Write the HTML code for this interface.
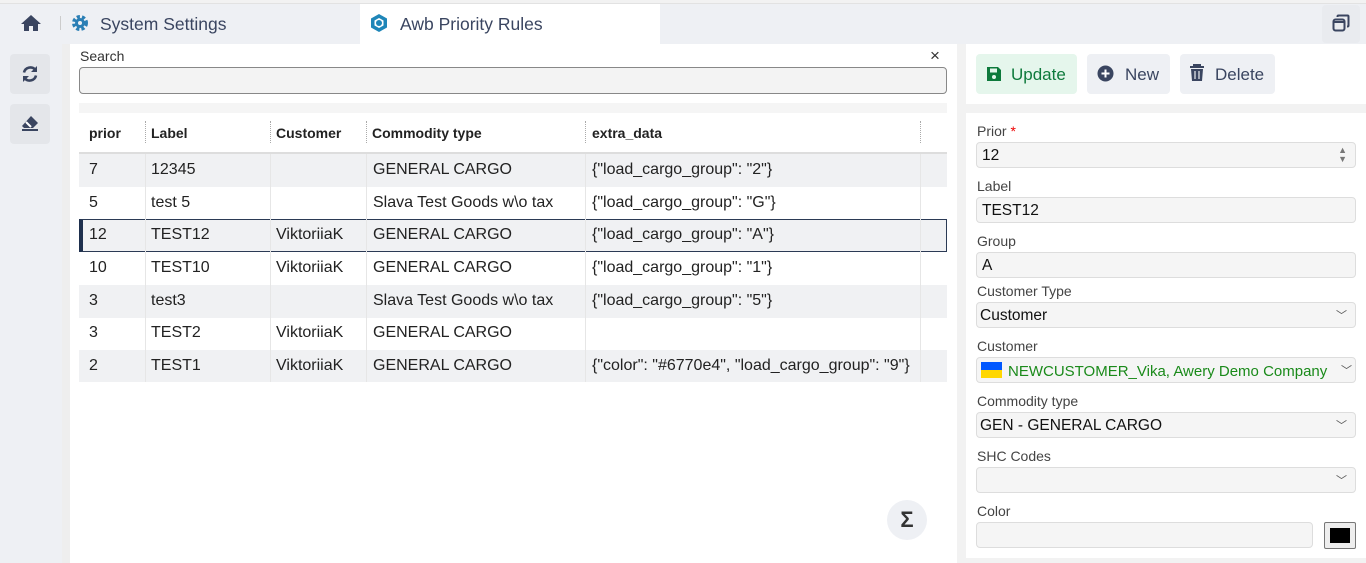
<!DOCTYPE html>
<html><head><meta charset="utf-8"><style>
*{box-sizing:border-box;margin:0;padding:0}
body{width:1366px;height:563px;overflow:hidden;background:#f2f2f2;font-family:"Liberation Sans",sans-serif;position:relative;color:#222}
.a{position:absolute}
.top{left:0;top:3px;width:1366px;height:41px;background:#eef0f4;border-top:1px solid #e2e2e2}
.tab{font-size:17.5px;color:#3a4560}
.cell{position:absolute;font-size:16px;color:#222;top:7px}
.row{position:absolute;left:79px;width:868px;height:33px}
.g{background:#f0f1f3}
.lbl{position:absolute;left:977px;font-size:14px;color:#444}
.in{position:absolute;left:976px;width:380px;height:26px;background:#f5f5f5;border:1px solid #ddd;border-radius:4px;font-size:15.5px;padding:4px 5px;color:#111}
.chev{position:absolute;right:8px;top:4px;font-size:11px;color:#555}
.btn{position:absolute;top:54px;height:40px;border-radius:4px;background:#eef0f4;font-size:17px;color:#3a4560;padding:11px 0 0 0}
</style></head><body>
<div class="a top"></div>
<div class="a" style="left:360px;top:4px;width:300px;height:40px;background:#fff"></div>
<svg class="a" style="left:20px;top:14px" width="22" height="18" viewBox="0 0 22 18"><path d="M11 1L1 10h3v7h5v-5h4v5h5v-7h3z" fill="#3a4560"/></svg>
<div class="a" style="left:60px;top:16px;width:1px;height:14px;background:#ccc"></div>
<svg class="a" style="left:71px;top:14px" width="18" height="18" viewBox="0 0 18 18"><circle cx="9" cy="9" r="6" fill="none" stroke="#2b7fb5" stroke-width="4" stroke-dasharray="3 2"/><circle cx="9" cy="9" r="5" fill="#2b7fb5"/><circle cx="9" cy="9" r="2" fill="#eef0f4"/></svg>
<div class="a tab" style="left:100px;top:14px">System Settings</div>
<svg class="a" style="left:370px;top:13px" width="18" height="20" viewBox="0 0 18 20"><path d="M9 1L17 5.5v9L9 19 1 14.5v-9z" fill="#1f86b8"/><path d="M9 5l4.5 2.5v5L9 15l-4.5-2.5v-5z" fill="#fff"/><circle cx="9" cy="10" r="3" fill="#1f86b8"/></svg>
<div class="a tab" style="left:400px;top:14px">Awb Priority Rules</div>
<div class="a" style="left:1322px;top:5px;width:38px;height:38px;background:#e9ebef;border-radius:4px"></div>
<svg class="a" style="left:1332px;top:14px" width="18" height="18" viewBox="0 0 18 18"><rect x="1.5" y="5.5" width="11" height="11" rx="2" fill="none" stroke="#3a4560" stroke-width="2"/><path d="M1.5 8h11" stroke="#3a4560" stroke-width="2"/><path d="M5.5 3V2.5a1 1 0 0 1 1-1h9a1 1 0 0 1 1 1v9a1 1 0 0 1-1 1H15" fill="none" stroke="#3a4560" stroke-width="2"/></svg>

<div class="a" style="left:0;top:44px;width:62px;height:519px;background:#eef0f4"></div>
<div class="a" style="left:62px;top:44px;width:8px;height:519px;background:#eeeeee"></div>
<div class="a" style="left:10px;top:54px;width:40px;height:40px;background:#e4e6ea;border-radius:4px"></div>
<div class="a" style="left:10px;top:104px;width:40px;height:40px;background:#e4e6ea;border-radius:4px"></div>
<svg class="a" style="left:21px;top:65px" width="18" height="18" viewBox="0 0 18 18"><path d="M3 7.5A6.5 6.5 0 0 1 14.5 5" fill="none" stroke="#3a4560" stroke-width="2.6"/><path d="M16 1v6h-6z" fill="#3a4560"/><path d="M15 10.5A6.5 6.5 0 0 1 3.5 13" fill="none" stroke="#3a4560" stroke-width="2.6"/><path d="M2 17v-6h6z" fill="#3a4560"/></svg>
<svg class="a" style="left:21px;top:115px" width="18" height="16" viewBox="0 0 18 16"><path d="M10 1l7 7-5 5H3l-2-2z" fill="#3a4560"/><path d="M5 7l5 5" stroke="#fff" stroke-width="2"/><path d="M1 15h16" stroke="#3a4560" stroke-width="2"/></svg>

<div class="a" style="left:70px;top:44px;width:887px;height:519px;background:#fff"></div>
<div class="a" style="left:80px;top:48px;font-size:14px;color:#333">Search</div>
<div class="a" style="left:930px;top:46px;font-size:17px;color:#333">×</div>
<div class="a" style="left:79px;top:67px;width:868px;height:27px;background:#f3f3f3;border:1px solid #888;border-radius:4px"></div>
<div class="a" style="left:79px;top:103px;width:868px;height:10px;background:#f5f5f5"></div>
<div class="a" style="left:79px;top:113px;width:868px;height:41px;border-bottom:2px solid #ddd">
<div class="cell" style="left:10px;top:12px;font-size:14px;font-weight:bold">prior</div>
<div class="cell" style="left:72px;top:12px;font-size:14px;font-weight:bold">Label</div>
<div class="cell" style="left:197px;top:12px;font-size:14px;font-weight:bold">Customer</div>
<div class="cell" style="left:293px;top:12px;font-size:14px;font-weight:bold">Commodity type</div>
<div class="cell" style="left:513px;top:12px;font-size:14px;font-weight:bold">extra_data</div>
<div class="a" style="left:66px;top:8px;height:22px;border-left:1px dotted #aaa"></div>
<div class="a" style="left:191px;top:8px;height:22px;border-left:1px dotted #aaa"></div>
<div class="a" style="left:287px;top:8px;height:22px;border-left:1px dotted #aaa"></div>
<div class="a" style="left:506px;top:8px;height:22px;border-left:1px dotted #aaa"></div>
<div class="a" style="left:841px;top:8px;height:22px;border-left:1px dotted #aaa"></div>
</div>

<div class="row g" style="top:154px"><div class="cell" style="left:10px">7</div><div class="cell" style="left:72px">12345</div><div class="cell" style="left:294px">GENERAL CARGO</div><div class="cell" style="left:513px">{"load_cargo_group": "2"}</div></div>
<div class="row" style="top:187px"><div class="cell" style="left:10px">5</div><div class="cell" style="left:72px">test 5</div><div class="cell" style="left:294px">Slava Test Goods w\o tax</div><div class="cell" style="left:513px">{"load_cargo_group": "G"}</div></div>
<div class="row g" style="top:219px;border:1px solid #2b3a55;border-left:4px solid #1e2f4d"><div class="cell" style="left:6px;top:6px">12</div><div class="cell" style="left:68px;top:6px">TEST12</div><div class="cell" style="left:193px;top:6px">ViktoriiaK</div><div class="cell" style="left:290px;top:6px">GENERAL CARGO</div><div class="cell" style="left:509px;top:6px">{"load_cargo_group": "A"}</div></div>
<div class="row" style="top:252px"><div class="cell" style="left:10px">10</div><div class="cell" style="left:72px">TEST10</div><div class="cell" style="left:197px">ViktoriiaK</div><div class="cell" style="left:294px">GENERAL CARGO</div><div class="cell" style="left:513px">{"load_cargo_group": "1"}</div></div>
<div class="row g" style="top:285px"><div class="cell" style="left:10px">3</div><div class="cell" style="left:72px">test3</div><div class="cell" style="left:294px">Slava Test Goods w\o tax</div><div class="cell" style="left:513px">{"load_cargo_group": "5"}</div></div>
<div class="row" style="top:317px"><div class="cell" style="left:10px">3</div><div class="cell" style="left:72px">TEST2</div><div class="cell" style="left:197px">ViktoriiaK</div><div class="cell" style="left:294px">GENERAL CARGO</div></div>
<div class="row g" style="top:350px;height:32px"><div class="cell" style="left:10px">2</div><div class="cell" style="left:72px">TEST1</div><div class="cell" style="left:197px">ViktoriiaK</div><div class="cell" style="left:294px">GENERAL CARGO</div><div class="cell" style="left:513px">{"color": "#6770e4", "load_cargo_group": "9"}</div></div>
<div class="a" style="left:145px;top:154px;width:1px;height:228px;background:#e6e6e6"></div>
<div class="a" style="left:270px;top:154px;width:1px;height:228px;background:#e6e6e6"></div>
<div class="a" style="left:366px;top:154px;width:1px;height:228px;background:#e6e6e6"></div>
<div class="a" style="left:585px;top:154px;width:1px;height:228px;background:#e6e6e6"></div>
<div class="a" style="left:920px;top:154px;width:1px;height:228px;background:#e6e6e6"></div>
<div class="a" style="left:887px;top:500px;width:40px;height:40px;border-radius:50%;background:#eef0f4;font-size:22px;text-align:center;line-height:40px;color:#333;font-weight:bold">Σ</div>

<div class="a" style="left:966px;top:44px;width:400px;height:60px;background:#fff"></div>
<div class="a" style="left:966px;top:113px;width:400px;height:445px;background:#fff"></div>
<div class="btn" style="left:976px;width:101px;background:#e5f6ec;color:#0e7a3c"><svg class="a" style="left:10px;top:12px" width="16" height="16" viewBox="0 0 16 16"><path d="M1 1h11l3 3v11H1z" fill="#0e7a3c"/><rect x="4" y="2.5" width="7" height="4" fill="#e5f6ec"/><circle cx="8" cy="11" r="2" fill="#e5f6ec"/></svg><span class="a" style="left:35px;top:11px">Update</span></div>
<div class="btn" style="left:1087px;width:83px"><svg class="a" style="left:10px;top:11px" width="17" height="17" viewBox="0 0 17 17"><circle cx="8.5" cy="8.5" r="8" fill="#3a4560"/><path d="M8.5 4.5v8M4.5 8.5h8" stroke="#fff" stroke-width="2"/></svg><span class="a" style="left:38px;top:11px">New</span></div>
<div class="btn" style="left:1180px;width:95px"><svg class="a" style="left:9px;top:10px" width="16" height="18" viewBox="0 0 16 18"><path d="M1 3h14M5 3V1h6v2" stroke="#3a4560" stroke-width="2" fill="none"/><path d="M2 5h12l-1 12H3z" fill="#3a4560"/><path d="M6 7v8M10 7v8" stroke="#eef0f4" stroke-width="1.2"/></svg><span class="a" style="left:35px;top:11px">Delete</span></div>

<div class="lbl" style="top:123px">Prior <span style="color:#e00">*</span></div>
<div class="in" style="top:142px">12<span class="a" style="right:8px;top:3px;font-size:9px;color:#777;line-height:9px">▲<br>▼</span></div>
<div class="lbl" style="top:178px">Label</div>
<div class="in" style="top:197px">TEST12</div>
<div class="lbl" style="top:233px">Group</div>
<div class="in" style="top:252px">A</div>
<div class="lbl" style="top:283px">Customer Type</div>
<div class="in" style="top:302px;padding-left:3px">Customer<span class="chev">﹀</span></div>
<div class="lbl" style="top:338px">Customer</div>
<div class="in" style="top:357px;padding-left:4px;color:#1a8a1a;white-space:nowrap;overflow:hidden;font-size:15px"><span style="display:inline-block;width:21px;height:16px;vertical-align:-2px;background:linear-gradient(#0057ff 50%,#ffd700 50%);margin-right:6px"></span>NEWCUSTOMER_Vika, Awery Demo Company<span class="chev" style="background:#f5f5f5;right:3px;padding-left:2px">﹀</span></div>
<div class="lbl" style="top:393px">Commodity type</div>
<div class="in" style="top:412px;padding-left:3px">GEN - GENERAL CARGO<span class="chev">﹀</span></div>
<div class="lbl" style="top:448px">SHC Codes</div>
<div class="in" style="top:467px"><span class="chev">﹀</span></div>
<div class="lbl" style="top:503px">Color</div>
<div class="in" style="top:522px;width:337px"></div>
<div class="a" style="left:1324px;top:522px;width:32px;height:27px;border:1px solid #777;border-radius:2px;background:#eee;padding:5px 5px"><div style="width:100%;height:100%;background:#000"></div></div>
</body></html>
